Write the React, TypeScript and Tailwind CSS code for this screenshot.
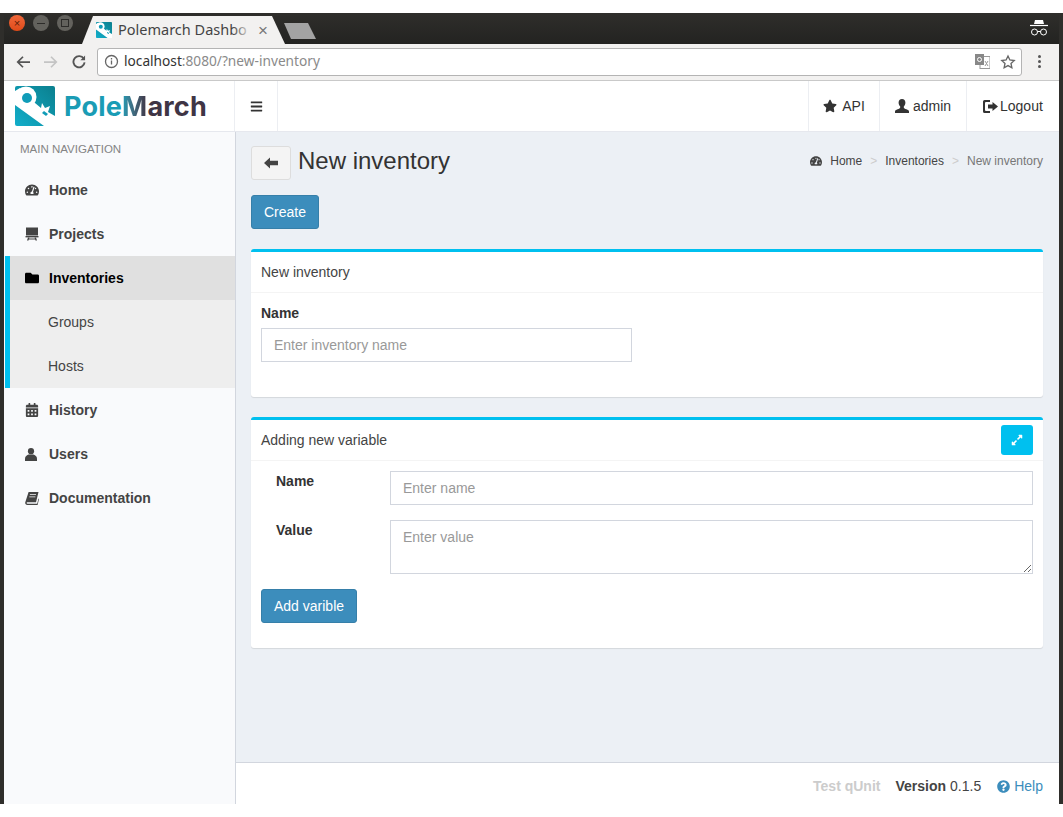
import React from 'react'
import {
  FaBars,
  FaCalendarAlt,
  FaExpandAlt,
  FaFolder,
  FaQuestionCircle,
  FaStar,
  FaTachometerAlt,
} from 'react-icons/fa'

const KeyLogo = ({ size }: { size: number }) => (
  <svg width={size} height={size} viewBox="0 0 40 40" className="shrink-0">
    <defs>
      <linearGradient id="logoGrad" x1="0" y1="1" x2="1" y2="0">
        <stop offset="0" stopColor="#12aeca" />
        <stop offset="1" stopColor="#0b7f8e" />
      </linearGradient>
    </defs>
    <rect width="40" height="40" rx="2" fill="url(#logoGrad)" />
    <circle cx="11" cy="11" r="10.5" fill="#fff" />
    <path d="M0 5 L5 2 L20 17 L26 22 L27 17 L30 22 L35 20 L33 26 L40 30 L40 40 L29 40 L0 19 Z" fill="#fff" />
    <circle cx="12" cy="12" r="5" fill="#109cb8" />
    <path d="M29 25 L33 28 L31 30 L27 27 Z" fill="#109cb8" />
  </svg>
)

const ProjectsIcon = () => (
  <svg width="14" height="14" viewBox="0 0 14 14" fill="currentColor">
    <rect x="1" y="0.5" width="12" height="8" />
    <rect x="0.5" y="9" width="13" height="1.4" />
    <path d="M3 10.5h1.4l-.9 3H2zM9.6 10.5H11l1 3h-1.5zM3 11.6h8v1H3z" />
  </svg>
)

const BookIcon = () => (
  <svg width="14" height="14" viewBox="0 0 14 14" fill="currentColor">
    <path d="M3.6 1H13.5L11 11.2H2.6c-.7 0-1 .4-1 .8s.4.8 1 .8h9.6l1.3-5.3.5.4L12.6 14H2.4C1 14 0 13 .2 11.6z" />
    <path d="M5 3.2h6v.9H4.8zM4.4 5.4h6v.9h-6.2z" fill="#f9fafc" />
  </svg>
)

const BustIcon = () => (
  <svg width="12" height="13" viewBox="0 0 12 13" fill="currentColor">
    <circle cx="6" cy="3.2" r="3.1" />
    <path d="M0 13v-2.4C0 8.4 2 7.2 3.6 6.6h4.8C10 7.2 12 8.4 12 10.6V13z" />
  </svg>
)

const GlyphUser = () => (
  <svg width="14" height="14" viewBox="0 0 14 14" fill="currentColor">
    <path d="M7 0c2.2 0 3.4 1.5 3.4 3.6 0 1.6-.7 3-1.6 3.9v1c0 .8 1.2 1.2 2.6 1.8 1.2.5 2.6 1 2.6 2.2V14H0v-1.5c0-1.2 1.4-1.7 2.6-2.2 1.4-.6 2.6-1 2.6-1.8v-1C4.3 6.6 3.6 5.2 3.6 3.6 3.6 1.5 4.8 0 7 0z" />
  </svg>
)

const GlyphBack = () => (
  <svg width="14" height="12" viewBox="0 0 14 12">
    <path d="M0 6 L6 0.5 V3.8 H14 V8.2 H6 V11.5 Z" fill="currentColor" />
  </svg>
)

const LogoutIcon = () => (
  <svg width="15" height="13" viewBox="0 0 15 13" fill="currentColor">
    <path d="M1.6 0H7v2H3a1 1 0 0 0-1 1v7a1 1 0 0 0 1 1h4v2H1.6A1.6 1.6 0 0 1 0 11.4V1.6A1.6 1.6 0 0 1 1.6 0z" />
    <path d="M5 4.5h4.5V2L15 6.5 9.5 11V8.5H5z" />
  </svg>
)

const navTop = [
  { label: 'Home', icon: <FaTachometerAlt size={14} /> },
  { label: 'Projects', icon: <ProjectsIcon /> },
]

const navBottom = [
  { label: 'History', icon: <FaCalendarAlt size={14} /> },
  { label: 'Users', icon: <BustIcon /> },
  { label: 'Documentation', icon: <BookIcon /> },
]

const NavRow = ({ label, icon }: { label: string; icon: React.ReactNode }) => (
  <div className="flex h-11 items-center pl-[21px] text-sm font-bold text-[#444]">
    <span className="flex w-6 justify-start">{icon}</span>
    {label}
  </div>
)

const BrowserChrome = () => (
  <>
    <div className="flex h-[31px] items-end bg-gradient-to-b from-[#2f2e2b] to-[#232321]">
      <div className="mb-[13px] ml-[5px] flex w-[72px] items-center gap-2">
        <span className="flex h-4 w-4 items-center justify-center rounded-full bg-gradient-to-b from-[#f0683a] to-[#df4a17] text-[11px] leading-none text-[#5a1d08]">×</span>
        <span className="flex h-4 w-4 items-center justify-center rounded-full bg-[#63625d]">
          <span className="h-px w-2 bg-[#2d2c2a]" />
        </span>
        <span className="flex h-4 w-4 items-center justify-center rounded-full bg-[#63625d]">
          <span className="h-2 w-2 border border-[#2d2c2a]" />
        </span>
      </div>
      <div className="relative ml-[1px] flex h-7 w-[203px] items-center bg-[#f2f1f0] pl-[14px] [clip-path:polygon(0_100%,11px_0,190px_0,100%_100%)]">
        <KeyLogo size={16} />
        <span className="ml-[6px] whitespace-nowrap font-['Noto_Sans',sans-serif] text-[14.5px] text-[#444]">Polemarch Dashbo</span>
        <span className="absolute left-[150px] top-0 h-full w-5 bg-gradient-to-r from-transparent to-[#f2f1f0]" />
        <span className="absolute left-[176px] text-[17px] leading-none text-[#777]">×</span>
      </div>
      <div className="mb-[5px] ml-[-1px] h-4 w-8 bg-[#a3a3a3] [clip-path:polygon(0_0,24px_0,100%_100%,7px_100%)]" />
      <div className="flex-1" />
      <svg width="18" height="20" viewBox="0 0 18 20" className="mb-[5px] mr-[11px] text-white" fill="none" stroke="currentColor">
        <path d="M5 1h8l1 4H4z" fill="currentColor" stroke="none" />
        <path d="M0 6.5h18" strokeWidth="1.2" />
        <circle cx="4.5" cy="13" r="3" />
        <circle cx="13.5" cy="13" r="3" />
        <path d="M7.5 12.5h3" />
      </svg>
    </div>
    <div className="flex h-[37px] items-center border-b border-[#c9c9c9] bg-[#f2f1f0] pb-px">
      <svg width="14" height="14" viewBox="0 0 16 16" className="ml-3" fill="none" stroke="#555" strokeWidth="2">
        <path d="M16 8H2M8 2L2 8l6 6" />
      </svg>
      <svg width="14" height="14" viewBox="0 0 16 16" className="ml-[14px]" fill="none" stroke="#c4c4c4" strokeWidth="2">
        <path d="M0 8h14M8 2l6 6-6 6" />
      </svg>
      <svg width="14" height="14" viewBox="0 0 15 15" className="ml-[14px]" fill="none" stroke="#555" strokeWidth="2">
        <path d="M12.6 4A6 6 0 1 0 13.5 8" />
        <path d="M14 0.5V5.5H9z" fill="#555" stroke="none" />
      </svg>
      <div className="ml-[11px] flex h-7 w-[925px] items-center rounded-[3px] border border-[#b4b4b4] bg-white pl-[6px] font-['Noto_Sans',sans-serif] text-[13.7px]">
        <svg width="15" height="15" viewBox="0 0 15 15" fill="none" stroke="#666" strokeWidth="1.3">
          <circle cx="7.5" cy="7.5" r="6" />
          <path d="M7.5 6.5v4M7.5 4v1.4" />
        </svg>
        <span className="ml-[5px] text-[#333]">localhost</span>
        <span className="text-[#8a8a8a]">:8080/?new-inventory</span>
        <div className="flex-1" />
        <svg width="15" height="15" viewBox="0 0 15 15" className="mr-[10px]">
          <rect x="5" y="2.5" width="10" height="12" fill="#fff" stroke="#999" />
          <rect x="0" y="0" width="9" height="11" fill="#888" />
          <circle cx="4.5" cy="5.5" r="2" fill="none" stroke="#fff" />
          <path d="M10 7l3 5M13 7l-3 5" stroke="#999" />
        </svg>
        <svg width="16" height="16" viewBox="0 0 24 24" className="mr-[5px]" fill="none" stroke="#666" strokeWidth="2">
          <path d="M12 3l2.8 6 6.5.8-4.8 4.4 1.3 6.5L12 17.4l-5.8 3.3 1.3-6.5L2.7 9.8 9.2 9z" />
        </svg>
      </div>
      <div className="ml-4 flex flex-col gap-[2px]">
        <span className="h-[3px] w-[3px] rounded-full bg-[#555]" />
        <span className="h-[3px] w-[3px] rounded-full bg-[#555]" />
        <span className="h-[3px] w-[3px] rounded-full bg-[#555]" />
      </div>
    </div>
  </>
)

const AppHeader = () => (
  <div className="flex h-[51px] border-b border-[#e6e8ee] bg-white text-sm text-[#333]">
    <div className="flex w-[231px] items-center border-r border-[#eceef2] pl-[11px]">
      <KeyLogo size={40} />
      <span className="ml-[9px] font-['Inter',sans-serif] text-[27px] font-bold leading-none tracking-[0.2px] text-[#3f3545]">
        <span className="text-[#1a9cb5]">Pole</span>
        <span className="bg-gradient-to-r from-[#1a9cb5] to-[#3f3545] bg-clip-text text-transparent">M</span>
        arch
      </span>
    </div>
    <div className="flex w-[43px] items-center justify-center border-r border-[#eceef2]">
      <FaBars size={13} />
    </div>
    <div className="flex-1" />
    <div className="flex h-full">
      <div className="flex w-[71px] items-center justify-center gap-[5px] border-l border-[#eceef2]">
        <FaStar size={14} />
        API
      </div>
      <div className="flex w-[87px] items-center justify-center gap-[4px] border-l border-[#eceef2]">
        <GlyphUser />
        admin
      </div>
      <div className="flex w-[93px] items-center gap-[2px] border-l border-[#eceef2] pl-[16px]">
        <LogoutIcon />
        Logout
      </div>
    </div>
  </div>
)

const Sidebar = () => (
  <aside className="flex w-[232px] shrink-0 flex-col border-r border-[#d2d6de] bg-[#f9fafc]">
    <div className="flex h-9 items-start pl-4 pt-[10px] text-[11.5px] leading-[14px] text-[#848484]">MAIN NAVIGATION</div>
    {navTop.map((item) => (
      <NavRow key={item.label} {...item} />
    ))}
    <div className="ml-px border-l-[5px] border-[#00c0ef]">
      <div className="flex h-11 items-center bg-[#e0e0e0] pl-[15px] text-sm font-bold text-black">
        <span className="flex w-6">
          <FaFolder size={14} />
        </span>
        Inventories
      </div>
      <div className="flex h-11 items-center bg-[#eeeeee] pl-[38px] text-sm text-[#444]">Groups</div>
      <div className="flex h-11 items-center bg-[#eeeeee] pl-[38px] text-sm text-[#444]">Hosts</div>
    </div>
    {navBottom.map((item) => (
      <NavRow key={item.label} {...item} />
    ))}
  </aside>
)

const Box = ({ title, action, children }: { title: string; action?: React.ReactNode; children: React.ReactNode }) => (
  <section className="rounded-[3px] border-t-[3px] border-[#00c0ef] bg-white shadow-[0_1px_1px_rgba(0,0,0,0.1)]">
    <div className="flex h-[41px] items-center justify-between border-b border-[#f4f4f4] pl-[10px] pr-[10px] text-sm text-[#444]">
      {title}
      {action}
    </div>
    {children}
  </section>
)

const inputClass =
  'h-[34px] border border-[#d2d6de] bg-white px-3 text-sm text-[#555] placeholder:text-[#999] outline-none'

const PrimaryButton = ({ children }: { children: React.ReactNode }) => (
  <button className="h-[34px] rounded-[3px] border border-[#367fa9] bg-[#3c8dbc] px-3 text-sm text-white">{children}</button>
)

const Content = () => (
  <main className="flex min-w-0 flex-1 flex-col bg-[#ecf0f5]">
    <div className="flex-1 px-[15px] pt-[14px] pr-4">
      <div className="flex h-[34px] items-center">
        <button className="flex h-[34px] w-10 items-center justify-center rounded-[3px] border border-[#ddd] bg-[#f4f4f4] text-[#444]">
          <GlyphBack />
        </button>
        <h1 className="ml-[7px] flex-1 pb-[4px] text-2xl leading-[30px] text-[#333]">New inventory</h1>
        <div className="flex items-center pb-[4px] text-xs text-[#444]">
          <FaTachometerAlt size={12} />
          <span className="ml-2">Home</span>
          <span className="mx-2 text-[#ccc]">&gt;</span>
          <span>Inventories</span>
          <span className="mx-2 text-[#ccc]">&gt;</span>
          <span className="text-[#777]">New inventory</span>
        </div>
      </div>
      <div className="mt-[15px]">
        <PrimaryButton>Create</PrimaryButton>
      </div>
      <div className="mt-5">
        <Box title="New inventory">
          <div className="h-[104px] px-[10px] pt-[12px]">
            <label className="block text-sm font-bold leading-[16px] text-[#333]">Name</label>
            <input className={`${inputClass} mt-[7px] block w-[371px]`} placeholder="Enter inventory name" />
          </div>
        </Box>
      </div>
      <div className="mt-5">
        <Box
          title="Adding new variable"
          action={
            <button className="flex h-[30px] w-8 items-center justify-center rounded-[3px] bg-[#00c0ef] text-white">
              <FaExpandAlt size={12} />
            </button>
          }
        >
          <div className="px-[10px] pt-[10px] pb-[25px]">
            <div className="flex">
              <label className="w-[129px] pl-[15px] text-sm font-bold text-[#333]">Name</label>
              <input className={`${inputClass} flex-1`} placeholder="Enter name" />
            </div>
            <div className="mt-[15px] flex">
              <label className="w-[129px] pl-[15px] text-sm font-bold text-[#333]">Value</label>
              <textarea className="block h-[54px] flex-1 border border-[#d2d6de] bg-white px-3 py-[6px] text-sm text-[#555] outline-none placeholder:text-[#999]" placeholder="Enter value" />
            </div>
            <div className="mt-[15px]">
              <PrimaryButton>Add varible</PrimaryButton>
            </div>
          </div>
        </Box>
      </div>
    </div>
    <footer className="flex h-[42px] items-center justify-end border-t border-[#d2d6de] bg-white pr-4 pt-[5px] text-sm text-[#444]">
      <span className="font-bold text-[#ccc]">Test qUnit</span>
      <span className="ml-[15px] font-bold">Version</span>
      <span className="ml-1">0.1.5</span>
      <span className="ml-4 flex items-center gap-1 text-[#3c8dbc]">
        <FaQuestionCircle size={13} />
        Help
      </span>
    </footer>
  </main>
)

export default function App() {
  return (
    <div className="h-[817px] w-[1063px] overflow-hidden bg-white pt-[13px] font-['Liberation_Sans',Arial,sans-serif]">
      <div className="flex h-[791px] flex-col border-x-4 border-[#2f2e2b]">
        <BrowserChrome />
        <AppHeader />
        <div className="flex min-h-0 flex-1">
          <Sidebar />
          <Content />
        </div>
      </div>
    </div>
  )
}
